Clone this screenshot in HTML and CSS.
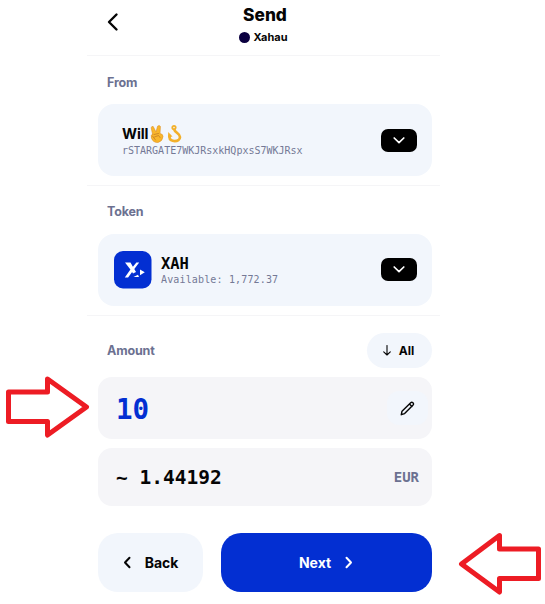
FILE: index.html
```
<!DOCTYPE html>
<html lang="en">
<head>
<meta charset="utf-8">
<title>Send</title>
<link rel="stylesheet" href="styles.css">
</head>
<body>
<main class="screen">
  <header class="header">
    <svg class="back-icon" width="12" height="20" viewBox="0 0 12 20"><path d="M9.500 2.500 2 10l7.500 7.500"/></svg>
    <div class="heading">
      <h1>Send</h1>
      <div class="network"><span class="dot"></span><span>Xahau</span></div>
    </div>
  </header>
  <section class="section">
    <div class="label">From</div>
    <div class="card">
      <div class="account">
        <div class="name"><span>Will</span><svg class="emoji" width="34" height="20" viewBox="0 0 34 20">
          <path class="hand" d="M3.500 10 2.200 3.800Q2.600 2 4.200 2.500L7 8 8.600 2.200Q10.200.800 11.400 2.400L11 9.500Q14 10 14 12.500 13.500 17.500 9 18.500 4 18.600 2.500 14.200 1.500 11 3.500 10Z"/>
          <path class="crease" d="m5 10.500 4.500-1M5.500 13l4-1.500 1.500 2M3.500 12l3 4"/>
          <circle class="ring" cx="25" cy="3.600" r="1.700"/>
          <path class="hook" d="M25.500 6c.5 2.500 5.500 3.500 5.500 7 0 5.500-10.500 5.500-10.500.3V12"/>
          <path class="barb" d="m19 13.500.2-5.500 4.300 4.500z"/>
        </svg></div>
        <div class="address">rSTARGATE7WKJRsxkHQpxsS7WKJRsx</div>
      </div>
      <span class="select"><svg width="14" height="9" viewBox="0 0 14 9"><path d="m2.200 2 4.800 4.700L11.800 2"/></svg></span>
    </div>
  </section>
  <section class="section token-section">
    <div class="label">Token</div>
    <div class="card token-card">
      <svg class="logo" width="38" height="38" viewBox="0 0 38 38">
        <rect width="37.500" height="37.500" rx="9"/>
        <path d="M11 11.500h5.500l2.400 4.300 3.500-4.300h2.800l-4.900 6.600 1.700 3-3 1.300-.9-1.500-4 5.600h-3.300l5.600-8zM26 18.600l4.800 2.600-4.800 3zM19.500 26l4.500-2.200 1 2.200z"/>
      </svg>
      <div class="token">
        <div class="symbol">XAH</div>
        <div class="available">Available: 1,772.37</div>
      </div>
      <span class="select"><svg width="14" height="9" viewBox="0 0 14 9"><path d="m2.200 2 4.800 4.700L11.800 2"/></svg></span>
    </div>
  </section>
  <section class="amount-section">
    <div class="amount-head">
      <span class="label">Amount</span>
      <span class="all"><svg width="8" height="11" viewBox="0 0 8 11"><path d="M4 .5v9.500M.7 6.800 4 10l3.300-3.200"/></svg><span>All</span></span>
    </div>
    <div class="field amount-field">
      <span class="amount">10</span>
      <span class="edit"><svg width="15" height="15" viewBox="0 0 15 15"><path d="m1.300 13.700.7-3.500 8.700-8.500q1.100-1 2.200 0 1.100 1.100.2 2.200l-8.500 8.700zM9.500 3l2.400 2.400"/></svg></span>
    </div>
    <div class="field fiat-field">
      <span class="fiat">~ 1.44192</span>
      <span class="currency">EUR</span>
    </div>
  </section>
  <footer class="actions">
    <div class="button back"><svg width="8" height="13" viewBox="0 0 8 13"><path d="M6.500 1.700 2 6.500l4.500 4.800"/></svg><span>Back</span></div>
    <div class="button next"><span>Next</span><svg width="8" height="13" viewBox="0 0 8 13"><path d="M1.500 1.700 6 6.500l-4.500 4.800"/></svg></div>
  </footer>
</main>
<svg class="pointer pointer-amount" width="86" height="66" viewBox="0 0 86 66"><path d="M3.500 18h39V5l39 28-39 28V47.500h-39z"/></svg>
<svg class="pointer pointer-next" width="86" height="66" viewBox="0 0 86 66"><path d="M80.500 18h-39V4.500L3.500 33l38 28V47.500h39z"/></svg>
</body>
</html>
```
FILE: styles.css
```
* { box-sizing: border-box; }
body {
  position: relative;
  width: 545px;
  height: 604px;
  margin: 0;
  overflow: hidden;
  background: #fff;
  color: #050505;
  font-family: Inter, "Liberation Sans", sans-serif;
}
svg { display: block; flex: none; fill: none; stroke: currentColor; stroke-linecap: round; stroke-linejoin: round; }
.screen { width: 353px; margin-left: 87px; }
.header { position: relative; height: 56px; padding: 4px 0 0 1px; border-bottom: 1px solid #f5f5f7; }
.back-icon { position: absolute; left: 20px; top: 12px; stroke-width: 2.4; }
.heading { display: flex; flex-direction: column; align-items: center; }
h1 { margin: 0 0 0 2px; font-size: 17.3px; line-height: 22px; font-weight: 800; }
.network { display: flex; align-items: center; gap: 4px; height: 22px; margin-right: 2px; font-size: 11px; font-weight: 700; }
.dot { width: 11px; height: 11px; border-radius: 50%; background: #0b0040; }
.section { height: 130px; padding: 17px 8px 0 11px; border-bottom: 1px solid #f5f5f7; }
.label { padding-left: 9px; color: #6c7191; font-size: 12.5px; line-height: 19px; font-weight: 700; letter-spacing: -.15px; }
.card { display: flex; align-items: center; height: 72px; margin-top: 12px; padding: 0 15px 0 24px; border-radius: 16px; background: #f2f6fc; }
.token-section { padding-top: 16px; }
.token-card { margin-top: 13px; padding-left: 16px; }
.account, .token { flex: 1; }
.name { display: flex; align-items: center; height: 20px; font-size: 14.5px; font-weight: 700; letter-spacing: -.1px; }
.address, .available { color: #747996; font: 10px/13px "DejaVu Sans Mono", monospace; }
.emoji { margin-left: 1px; }
.hand { fill: #f9b62b; stroke: #dd8f20; stroke-width: .6; }
.crease { stroke: #bd7524; stroke-width: .7; }
.ring, .hook { stroke: #f2b02b; stroke-width: 1.8; }
.hook { stroke-width: 2.7; }
.barb { fill: #f2b02b; stroke: none; }
.select { display: flex; align-items: center; justify-content: center; width: 36px; height: 23px; border-radius: 7px; background: #000; color: #fff; }
.token-card .select { margin-top: -1px; }
.select svg { stroke-width: 1.7; }
.token { padding-left: 9px; }
.logo { fill: #fff; stroke: none; }
.logo rect { fill: #032fd2; }
.symbol { font: 700 15.5px/18px "DejaVu Sans Mono", monospace; letter-spacing: -.1px; }
.available { letter-spacing: .15px; }
.amount-section { padding: 17px 8px 0 11px; }
.amount-head { display: flex; align-items: center; justify-content: space-between; height: 35px; }
.all { display: flex; align-items: center; justify-content: center; gap: 8px; width: 65px; height: 35px; padding-right: 2px; border-radius: 18px; background: #f2f6fc; font-size: 12px; font-weight: 700; }
.all svg { stroke-width: 1.1; }
.field { display: flex; align-items: center; justify-content: space-between; border-radius: 14px; background: #f5f5f8; }
.amount-field { height: 62px; margin-top: 9px; padding: 0 4px 0 18px; }
.amount { padding-top: 2px; color: #032fd2; font: 700 27.5px/32px "DejaVu Sans Mono", monospace; }
.edit { display: flex; align-items: center; justify-content: center; width: 41px; height: 34px; border-radius: 12px; background: #f2f6fc; }
.edit svg { stroke-width: 1.4; }
.fiat-field { height: 58px; margin-top: 9px; padding: 0 13px 0 18px; }
.fiat { padding-top: 2px; font: 700 19.5px/24px "DejaVu Sans Mono", monospace; }
.currency { color: #6c7191; font: 700 14px/20px "DejaVu Sans Mono", monospace; }
.actions { display: grid; grid-template-columns: 105px 211px; gap: 18px; padding: 27px 8px 0 11px; }
.button { display: flex; align-items: center; justify-content: center; gap: 14px; height: 59px; border-radius: 20px; font-size: 14px; font-weight: 700; }
.button svg { stroke-width: 2; }
.back { background: #f2f6fc; }
.next { padding-right: 1px; background: #032fd2; color: #fff; }
.pointer { position: absolute; color: #ed1c24; stroke-width: 5; }
.pointer-amount { left: 5px; top: 374px; }
.pointer-next { left: 458px; top: 531px; }
```
